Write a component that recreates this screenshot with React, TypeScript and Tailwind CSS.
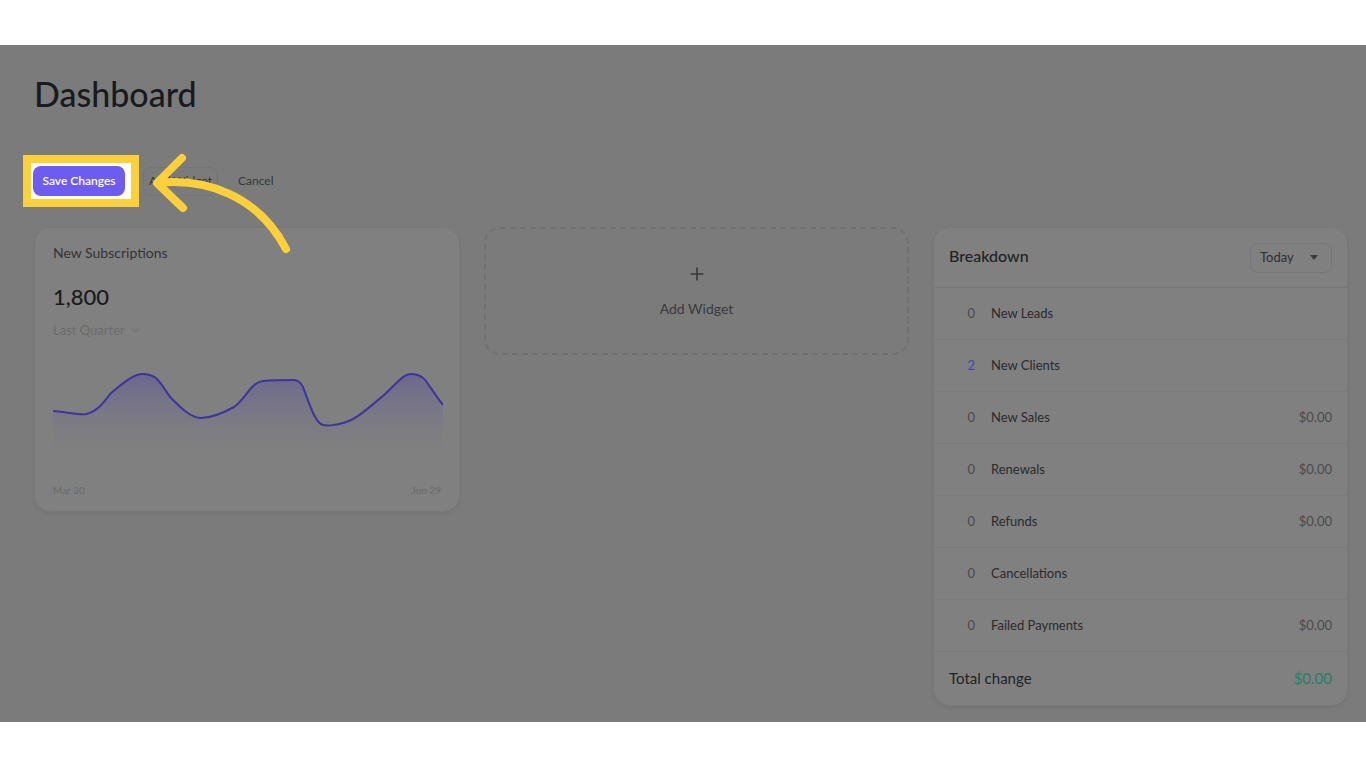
import { Plus, ChevronDown } from "lucide-react";

type Row = {
  count: number;
  label: string;
  amount?: string;
  highlight?: boolean;
};

const rows: Row[] = [
  { count: 0, label: "New Leads" },
  { count: 2, label: "New Clients", highlight: true },
  { count: 0, label: "New Sales", amount: "$0.00" },
  { count: 0, label: "Renewals", amount: "$0.00" },
  { count: 0, label: "Refunds", amount: "$0.00" },
  { count: 0, label: "Cancellations" },
  { count: 0, label: "Failed Payments", amount: "$0.00" },
];

const linePath =
  "M0,46 C15,47 25,50 33,49 C45,47 52,35 58,28 C70,18 80,9 90,9 C97,9 100,11 103,13 C110,20 113,27 118,33 C128,43 138,53 148,53 C158,53 170,48 181,42 C192,35 198,17 210,16 C220,15 235,15 241,15 C246,15 248,18 250,22 C256,38 262,58 270,60 C278,61 282,60 290,58 C302,55 312,46 331,30 C342,20 350,9 358,9 C365,9 370,12 373,16 C380,26 386,35 390,40";

function SubscriptionsCard() {
  return (
    <div className="flex h-[285px] flex-col rounded-2xl border border-[#787878] bg-[#808080] px-[18px] pt-[15px] shadow-[0_2px_4px_rgba(0,0,0,0.06)]">
      <p className="text-[14px] leading-5 text-[#343437]">New Subscriptions</p>
      <p className="mt-[20px] text-[22px] font-medium leading-7 text-[#1a1a1e]">1,800</p>
      <div className="mt-[10px] flex items-center gap-1 text-[13px] leading-[18px] text-[#6c6c6c]">
        Last Quarter
        <ChevronDown size={13} strokeWidth={1.6} />
      </div>
      <svg
        viewBox="0 0 390 100"
        className="mt-[26px] h-[100px] w-[390px]"
        preserveAspectRatio="none"
      >
        <defs>
          <linearGradient id="subsFill" x1="0" y1="0" x2="0" y2="1">
            <stop offset="0%" stopColor="#635c96" stopOpacity="0.7" />
            <stop offset="100%" stopColor="#808080" stopOpacity="0" />
          </linearGradient>
        </defs>
        <path d={`${linePath} L390,100 L0,100 Z`} fill="url(#subsFill)" />
        <path d={linePath} fill="none" stroke="#3e349c" strokeWidth="2" />
      </svg>
      <div className="mt-[18px] flex justify-between text-[10px] leading-[14px] text-[#6a6a6a]">
        <span>Mar 30</span>
        <span>Jun 29</span>
      </div>
    </div>
  );
}

function AddWidget() {
  return (
    <div className="flex h-[128px] flex-col items-center rounded-2xl border-2 border-dashed border-[#707070] pt-[35px] text-[#3a3a3e]">
      <Plus size={20} strokeWidth={2} />
      <p className="mt-[15px] text-[14px] leading-5">Add Widget</p>
    </div>
  );
}

function BreakdownCard() {
  return (
    <div className="flex flex-col rounded-2xl border border-[#787878] bg-[#808080] shadow-[0_2px_4px_rgba(0,0,0,0.06)]">
      <div className="flex h-[60px] items-center justify-between border-b border-[#787878] px-[15px]">
        <p className="-mt-[3px] text-[16px] font-medium text-[#222225]">Breakdown</p>
        <div className="flex h-[30px] w-[82px] items-center justify-between rounded-lg border border-[#767676] pl-[9px] pr-[13px] text-[13px] text-[#2e2e32]">
          Today
          <span className="h-0 w-0 border-x-[4px] border-t-[5px] border-x-transparent border-t-[#3a3a3e]" />
        </div>
      </div>
      {rows.map((r) => (
        <div
          key={r.label}
          className="flex h-[52px] items-center border-b border-[#7a7a7a] pl-[15px] pr-[15px] text-[13px]"
        >
          <span
            className={
              "w-[26px] text-right " +
              (r.highlight ? "text-[#4a3fc0]" : "text-[#4a4a4c]")
            }
          >
            {r.count}
          </span>
          <span className="ml-[16px] flex-1 text-[#2a2a2e]">{r.label}</span>
          {r.amount && <span className="text-[#4a4a4c]">{r.amount}</span>}
        </div>
      ))}
      <div className="flex h-[53px] items-center justify-between px-[15px] text-[15px]">
        <span className="text-[#222225]">Total change</span>
        <span className="text-[#287f66]">$0.00</span>
      </div>
    </div>
  );
}

export default function App() {
  return (
    <div
      className="flex h-[768px] w-[1366px] flex-col bg-white"
      style={{ fontFamily: "Lato, 'Open Sans', sans-serif" }}
    >
      <div className="h-[45px] shrink-0" />
      <div className="relative h-[677px] shrink-0 overflow-hidden bg-[#7b7b7b] pl-[34px]">
        <h1 className="mt-[29px] text-[34px] font-medium leading-10 text-[#1a1a1e]">
          Dashboard
        </h1>

        <div className="mt-[52px] flex h-[30px] items-center">
          <div className="relative -ml-px">
            <span className="absolute -left-[10px] -top-[11px] h-[52px] w-[116px] border-[8px] border-[#fcd03b] bg-white" />
            <button className="relative z-10 h-[30px] w-[92px] rounded-lg bg-[#6c5cf2] text-[12px] font-semibold text-white">
              Save Changes
            </button>
          </div>
          <button className="ml-[18px] h-[29px] w-[75px] rounded-lg border border-[#747474] text-[12px] text-[#333336]">
            Add Widget
          </button>
          <span className="ml-[20px] text-[12px] text-[#38383b]">Cancel</span>
        </div>

        <div className="mt-[31px] grid grid-cols-[426px_425px_415px] items-start gap-6">
          <SubscriptionsCard />
          <AddWidget />
          <BreakdownCard />
        </div>

        <svg
          className="pointer-events-none absolute left-0 top-0 z-20"
          width="320"
          height="240"
          viewBox="0 0 320 240"
        >
          <g fill="none" stroke="#fcd03b" strokeWidth="8" strokeLinecap="round" strokeLinejoin="round">
            <path d="M158,138 C205,133 258,150 286,204" />
            <path d="M182,113 L157,138 L183,163" />
          </g>
        </svg>
      </div>
      <div className="flex-1" />
    </div>
  );
}
